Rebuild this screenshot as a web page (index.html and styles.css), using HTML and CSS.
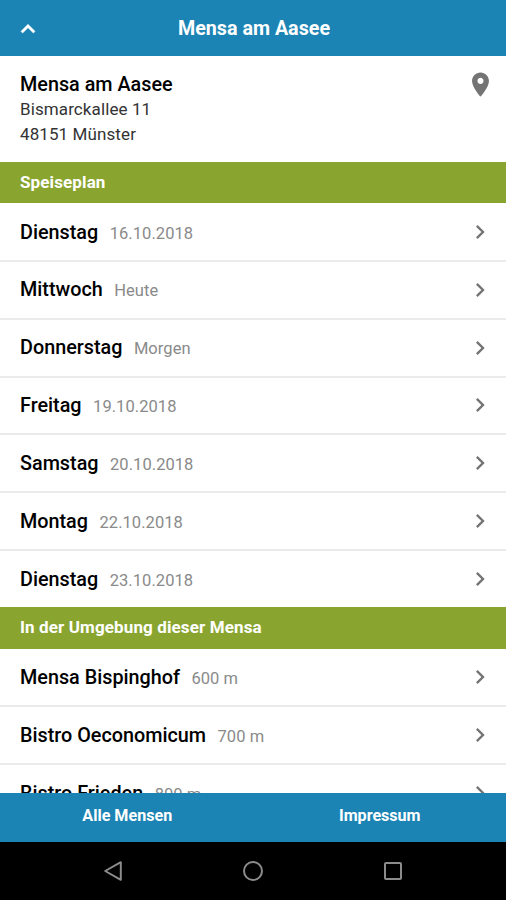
FILE: index.html
```html
<!DOCTYPE html>
<html lang="de">
<head>
    <meta charset="UTF-8">
    <meta name="viewport" content="width=device-width, initial-scale=1.0">
    <title>Mensa am Aasee</title>
    <link rel="stylesheet" href="styles.css">
</head>
<body>
    <svg class="icon-defs" aria-hidden="true">
        <symbol id="chevron" viewBox="0 0 24 24">
            <path d="M10 6L8.59 7.41 13.17 12l-4.58 4.59L10 18l6-6z"/>
        </symbol>
    </svg>

    <div class="app">
        <header class="topbar">
            <svg class="icon back" viewBox="0 0 24 24"><path d="M12 8l-6 6 1.41 1.41L12 10.83l4.59 4.58L18 14z"/></svg>
            <h1>Mensa am Aasee</h1>
        </header>

        <main class="content">
            <section class="address">
                <div>
                    <h2>Mensa am Aasee</h2>
                    <p>Bismarckallee 11</p>
                    <p>48151 Münster</p>
                </div>
                <svg class="icon pin" viewBox="0 0 24 24"><path d="M12 2C8.13 2 5 5.13 5 9c0 5.25 7 13 7 13s7-7.75 7-13c0-3.87-3.13-7-7-7zm0 9.5c-1.38 0-2.5-1.12-2.5-2.5s1.12-2.5 2.5-2.5 2.5 1.12 2.5 2.5-1.12 2.5-2.5 2.5z"/></svg>
            </section>

            <h3 class="section-title">Speiseplan</h3>
            <ul class="list">
                <li><strong>Dienstag</strong><span>16.10.2018</span><svg class="icon"><use href="#chevron"/></svg></li>
                <li><strong>Mittwoch</strong><span>Heute</span><svg class="icon"><use href="#chevron"/></svg></li>
                <li><strong>Donnerstag</strong><span>Morgen</span><svg class="icon"><use href="#chevron"/></svg></li>
                <li><strong>Freitag</strong><span>19.10.2018</span><svg class="icon"><use href="#chevron"/></svg></li>
                <li><strong>Samstag</strong><span>20.10.2018</span><svg class="icon"><use href="#chevron"/></svg></li>
                <li><strong>Montag</strong><span>22.10.2018</span><svg class="icon"><use href="#chevron"/></svg></li>
                <li><strong>Dienstag</strong><span>23.10.2018</span><svg class="icon"><use href="#chevron"/></svg></li>
            </ul>

            <h3 class="section-title">In der Umgebung dieser Mensa</h3>
            <ul class="list">
                <li><strong>Mensa Bispinghof</strong><span>600 m</span><svg class="icon"><use href="#chevron"/></svg></li>
                <li><strong>Bistro Oeconomicum</strong><span>700 m</span><svg class="icon"><use href="#chevron"/></svg></li>
                <li><strong>Bistro Frieden</strong><span>800 m</span><svg class="icon"><use href="#chevron"/></svg></li>
            </ul>
        </main>

        <footer class="tabs">
            <a>Alle Mensen</a>
            <a>Impressum</a>
        </footer>

        <nav class="android-nav">
            <svg viewBox="0 0 24 24"><path d="M19.8 3.2v17.6L4.2 12z"/></svg>
            <svg viewBox="0 0 24 24"><circle cx="12" cy="12" r="9"/></svg>
            <svg viewBox="0 0 24 24"><rect x="4" y="4" width="16" height="16" rx="1"/></svg>
        </nav>
    </div>
</body>
</html>
```

FILE: styles.css
```css
* {
    box-sizing: border-box;
    margin: 0;
    padding: 0;
}
body {
    font-family: Roboto, "Liberation Sans", sans-serif;
    background: #fff;
    color: #000;
}
.icon-defs {
    display: none;
}
.app {
    display: flex;
    flex-direction: column;
    height: 900px;
    overflow: hidden;
}
.icon {
    width: 28px;
    height: 28px;
    fill: #747474;
    flex: none;
}
.topbar {
    display: flex;
    align-items: center;
    height: 56px;
    flex: none;
    padding: 1px 14px 0;
    background: #1b84b5;
    color: #fff;
}
.topbar .back {
    fill: #fff;
    stroke: #fff;
    stroke-width: 0.5;
}
.topbar h1 {
    flex: 1;
    padding-right: 26px;
    text-align: center;
    font-size: 19.7px;
    font-weight: 700;
}
.content {
    flex: 1;
    min-height: 0;
    overflow: hidden;
}
.address {
    display: flex;
    justify-content: space-between;
    height: 106px;
    padding: 15px 11px 0 20px;
}
.address h2 {
    padding-top: 1px;
    font-size: 19.8px;
    font-weight: 500;
    line-height: 25px;
}
.address p {
    font-size: 17px;
    line-height: 25px;
    letter-spacing: 0.1px;
    color: #333;
}
.address .pin {
    width: 29px;
    height: 29px;
    margin-top: -1px;
}
.section-title {
    height: 41.4px;
    padding-left: 20px;
    background: #89a530;
    color: #fff;
    font-size: 17px;
    font-weight: 700;
    line-height: 40px;
    letter-spacing: 0.12px;
}
.list {
    padding-top: 0.8px;
    list-style: none;
}
.list li {
    display: flex;
    align-items: center;
    height: 57.8px;
    padding: 0 12px 0 20px;
    border-bottom: 2px solid #ebebeb;
}
.list li:last-child {
    height: 56.2px;
    border-bottom: none;
}
.list strong {
    font-size: 19.8px;
    font-weight: 500;
}
.list span {
    margin: 2px 0 0 11.5px;
    font-size: 16.5px;
    letter-spacing: 0.05px;
    color: #8a8a8a;
}
.list .icon {
    margin-left: auto;
}
.tabs {
    display: flex;
    flex: none;
    height: 49px;
    padding-left: 1px;
    background: #1b84b5;
    color: #fff;
}
.tabs a {
    flex: 1;
    text-align: center;
    font-size: 16.1px;
    font-weight: 700;
    line-height: 46px;
}
.android-nav {
    display: flex;
    flex: none;
    align-items: center;
    justify-content: center;
    gap: 116px;
    height: 58px;
    background: #000;
}
.android-nav svg {
    width: 24px;
    height: 24px;
    fill: none;
    stroke: #8c8c8c;
    stroke-width: 2;
    stroke-linejoin: round;
}
```
